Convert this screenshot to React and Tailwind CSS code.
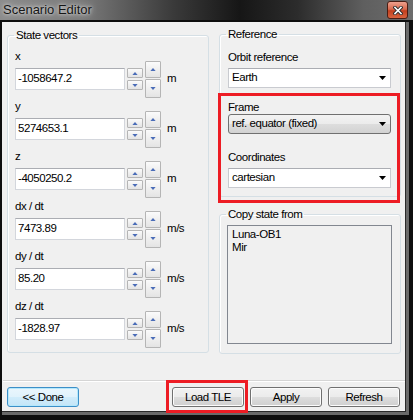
const font = "font-['Liberation_Sans',sans-serif] text-[11.5px] tracking-[-0.45px] text-black";

const Tri = ({ up, color = '#4a6cb8', w = 7, h = 4 }) => (
  <svg width={w} height={h} viewBox="0 0 7 4">
    {up ? <polygon points="0,4 7,4 3.5,0" fill={color} /> : <polygon points="0,0 7,0 3.5,4" fill={color} />}
  </svg>
);

const SpinBtn = ({ up, className }) => (
  <div
    className={`flex items-center justify-center rounded-[1px] border border-[#b5b5b5] bg-[linear-gradient(#fbfbfb,#e4e4e4)] ${className}`}
  >
    <Tri up={up} w={6} h={3} />
  </div>
);

const VecField = ({ label, value, unit, first }) => (
  <div className={first ? 'mt-[7px]' : 'mt-[9px]'}>
    <div className="h-[14px] leading-[14px]">{label}</div>
    <div className="mt-[5px] flex h-[22px] items-center">
      <div className="flex h-[22px] w-[110px] items-center border border-[#d3d6dc] border-t-[#abadb3] bg-white pl-[2px]">
        {value}
      </div>
      <div className="ml-[2px] flex h-[22px] w-[16px] flex-col gap-[2px]">
        <SpinBtn up className="h-[10px]" />
        <SpinBtn className="h-[10px]" />
      </div>
      <div className="ml-[2px] flex h-[37px] w-[16px] flex-col gap-[1px]">
        <SpinBtn up className="h-[17px] border-[#a8a8a8]" />
        <SpinBtn className="h-[19px] border-[#a8a8a8]" />
      </div>
      <span className="ml-[6px]">{unit}</span>
    </div>
  </div>
);

const Combo = ({ value, button, className = '' }) => (
  <div
    className={`flex h-[20px] w-[163px] items-center justify-between pl-[3px] pr-[4px] ${
      button
        ? 'rounded-[3px] border border-[#707070] bg-[linear-gradient(#f3f3f3_0%,#ebebeb_50%,#dddddd_51%,#d2d2d2_100%)]'
        : 'border border-[#c9cbd0] border-t-[#abadb3] bg-white'
    } ${className}`}
  >
    <span>{value}</span>
    <Tri color="#000" w={7} h={4} />
  </div>
);

const Button = ({ children, def }) => (
  <button
    className={`h-[20px] w-[72px] rounded-[3px] border leading-[18px] ${
      def
        ? 'border-[#3c8fc8] bg-[linear-gradient(#eaf6fd_0%,#e0f2fc_50%,#d0ecfb_51%,#c4e5f7_100%)] shadow-[inset_0_0_0_1px_#b4e8fc]'
        : 'border-[#707070] bg-[linear-gradient(#f2f2f2_0%,#ebebeb_50%,#dddddd_51%,#cfcfcf_100%)] shadow-[inset_0_0_0_1px_#fcfcfc]'
    }`}
  >
    {children}
  </button>
);

const Group = ({ title, className, inner, children }) => (
  <fieldset className={`rounded-[3px] border border-[#d5dfe5] shadow-[inset_1px_1px_0_#fff] ${className}`}>
    <legend className="ml-[6px] px-[2px] leading-[14px]">{title}</legend>
    <div className={inner}>{children}</div>
  </fieldset>
);

export default function App() {
  const vectors = [
    ['x', '-1058647.2', 'm'],
    ['y', '5274653.1', 'm'],
    ['z', '-4050250.2', 'm'],
    ['dx / dt', '7473.89', 'm/s'],
    ['dy / dt', '85.20', 'm/s'],
    ['dz / dt', '-1828.97', 'm/s'],
  ];

  return (
    <div className={`relative flex h-[420px] w-[413px] flex-col overflow-hidden bg-[#0e0e0e] ${font}`}>
      {/* title bar */}
      <div className="flex h-[20px] items-start justify-between bg-[linear-gradient(90deg,#8c8c8c_0%,#7a7a7a_20%,#3a3a3a_42%,#161616_58%,#2c2c2c_72%,#5f5f5f_88%,#6c6c6c_100%)]">
        <span className="pl-[3px] pt-[2px] text-[13px] leading-[16px] tracking-normal text-[#161616] [text-shadow:0_0_6px_#e0e0e0,0_0_3px_#d8d8d8]">
          Scenario Editor
        </span>
        <div className="mr-[5px] mt-[1px] flex h-[18px] w-[21px] items-center justify-center rounded-[3px] border border-[#4a1e14] bg-[linear-gradient(#eea18e_0%,#d9694d_45%,#c2401f_55%,#d8643f_100%)]">
          <svg width="10" height="9" viewBox="0 0 10 9">
            <path d="M2 1.5 L8 7.5 M8 1.5 L2 7.5" stroke="#2b2b2b" strokeWidth="3.4" strokeLinecap="square" />
            <path d="M2 1.5 L8 7.5 M8 1.5 L2 7.5" stroke="#fff" strokeWidth="1.6" strokeLinecap="square" />
          </svg>
        </div>
      </div>

      <div className="ml-[2px] mt-[2px] h-[393px] w-[407px] bg-[#6a6a6a]">
        <div className="flex h-[390px] w-[404px] flex-col border-b border-r border-[#2a2a2a] bg-[#f0f0f0]">
          <div className="flex items-start pt-[5px]">
            <Group title="State vectors" className="ml-[5px] mt-[1px] w-[202px]" inner="pb-[12px] pl-[7px]">
              {vectors.map(([l, v, u], i) => (
                <VecField key={l} label={l} value={v} unit={u} first={i === 0} />
              ))}
            </Group>

            <div className="ml-[10px] flex w-[182px] flex-col">
              <Group title="Reference" className="w-[182px]" inner="pb-[8px] pl-[8px]">
                <div className="mt-[9px] h-[14px] leading-[14px]">Orbit reference</div>
                <Combo value="Earth" className="mt-[4px]" />
                <div className="mt-[12px] h-[14px] leading-[14px]">Frame</div>
                <Combo value="ref. equator (fixed)" button />
                <div className="mt-[16px] h-[14px] leading-[14px]">Coordinates</div>
                <Combo value="cartesian" className="mt-[4px]" />
              </Group>

              <Group title="Copy state from" className="mt-[10px] w-[182px]" inner="pb-[9px] pl-[7px]">
                <div className="mt-[4px] h-[119px] w-[165px] border border-[#828790] pl-[4px] pt-[2px] leading-[13px]">
                  <div>Luna-OB1</div>
                  <div>Mir</div>
                </div>
              </Group>
            </div>
          </div>

          <div className="mt-auto pb-[4px]">
            <div className="ml-[1px] border-b border-t border-b-white border-t-[#d5d5d5]" />
            <div className="mt-[5px] flex items-center justify-between pl-[5px] pr-[5px]">
              <Button def>&lt;&lt; Done</Button>
              <div className="flex gap-[6px]">
                <Button>Load TLE</Button>
                <Button>Apply</Button>
                <Button>Refresh</Button>
              </div>
            </div>
          </div>
        </div>
      </div>

      {/* red annotation boxes */}
      <div className="absolute left-[218px] top-[93px] h-[110px] w-[182px] border-[3px] border-[#ed1c24]" />
      <div className="absolute left-[166px] top-[380px] h-[33px] w-[82px] border-[3px] border-[#ed1c24]" />
    </div>
  );
}
